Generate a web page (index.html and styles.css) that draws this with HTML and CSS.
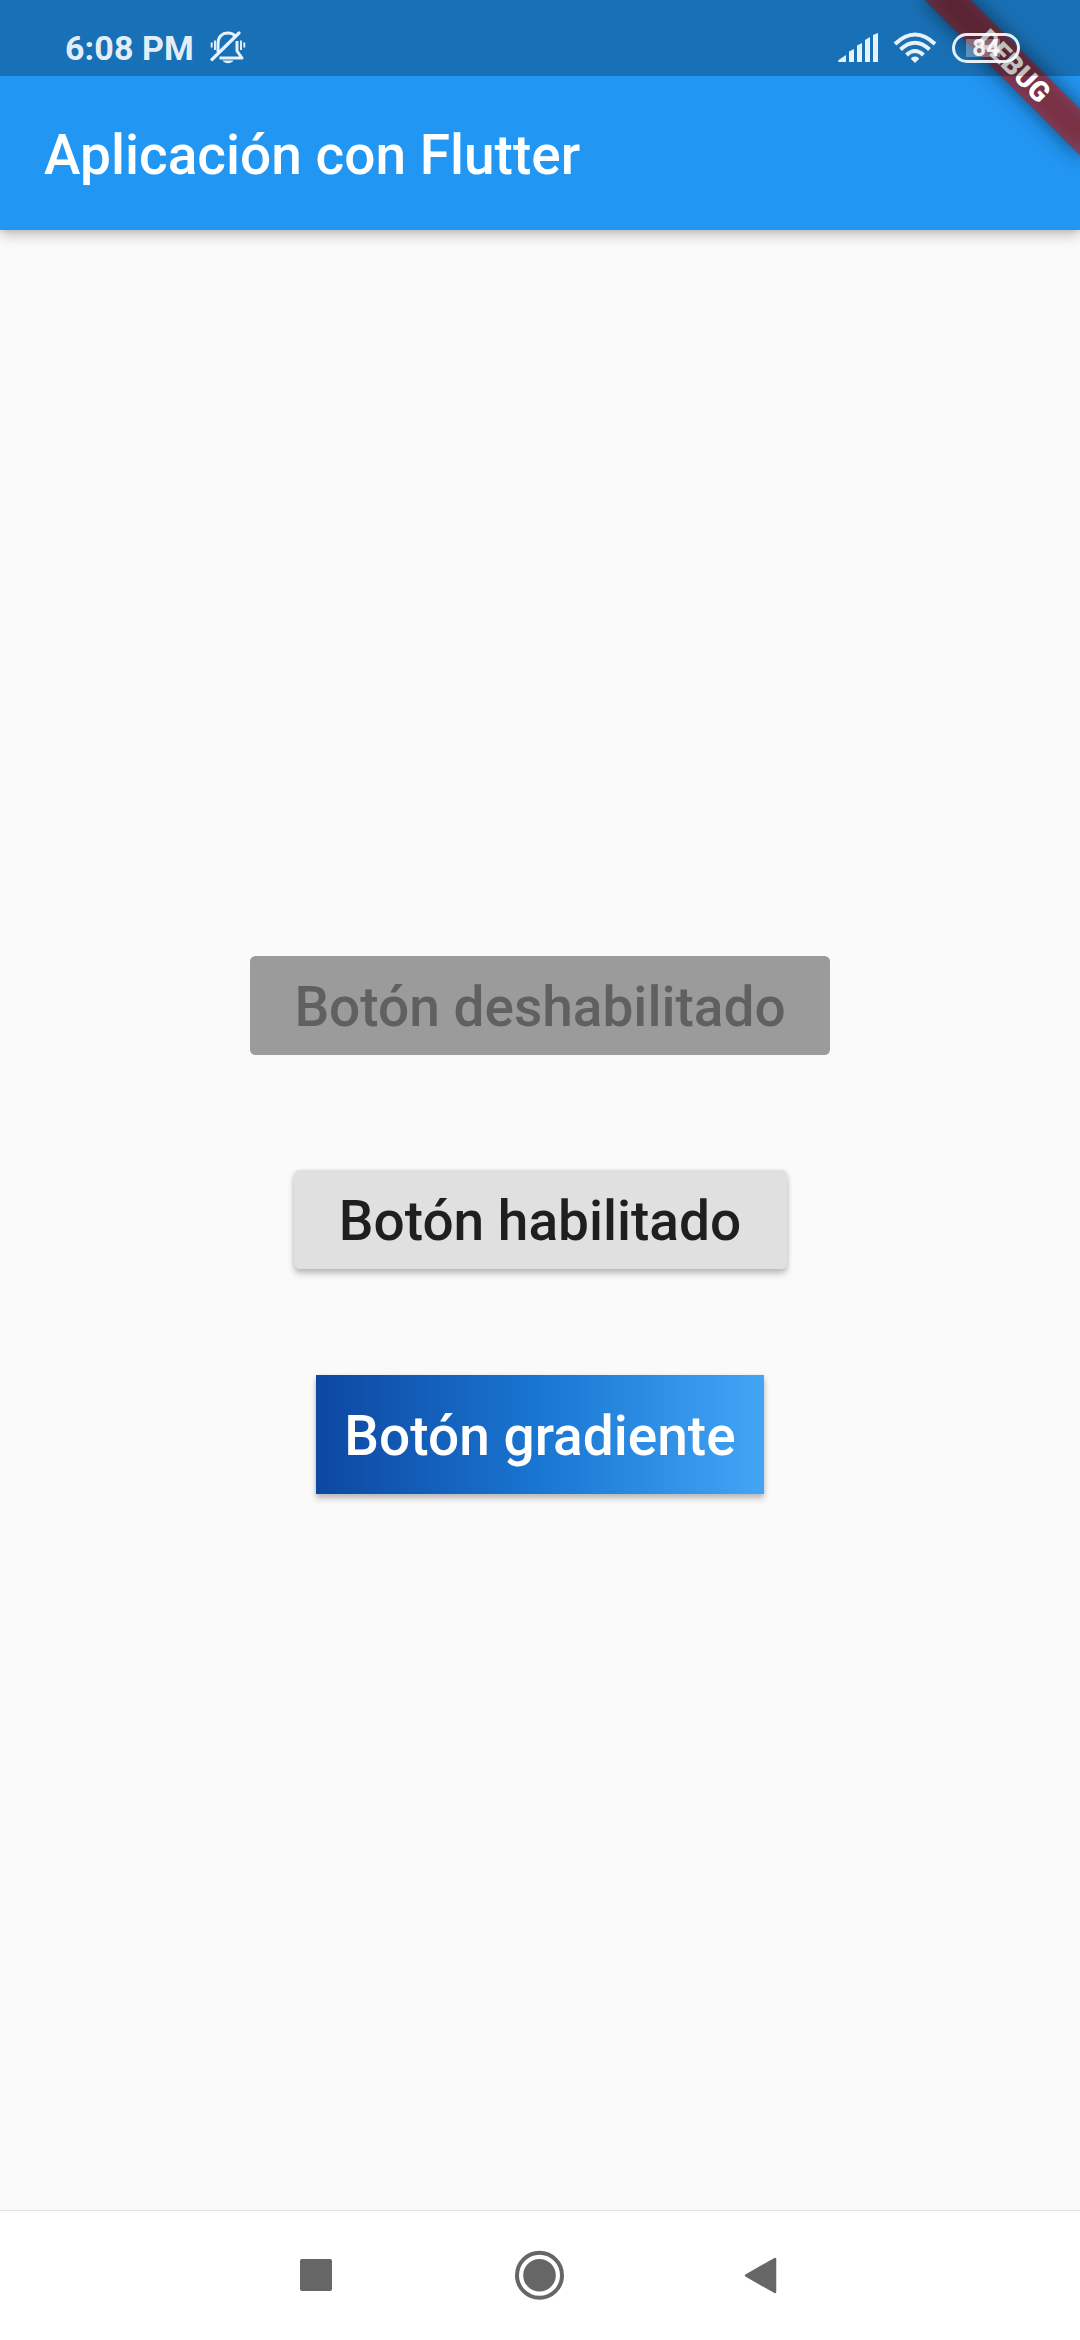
FILE: index.html
```html
<!DOCTYPE html>
<html lang="es">
<head>
<meta charset="utf-8">
<title>Aplicación con Flutter</title>
<link rel="stylesheet" href="styles.css">
</head>
<body>
<div class="screen">
  <header class="top">
    <div class="status">
      <span class="clock">6:08 PM</span>
      <svg class="bell" width="36" height="34" viewBox="0 0 36 34" fill="none" stroke="currentColor">
        <path d="M8 21V13C8 6 12 2 18 2C21 2 23.500 3 25 5" stroke-width="3"/>
        <path d="M27 10V20L32 27H9.500" stroke-width="3" stroke-linejoin="round"/>
        <path d="M2 28.500L29 2" stroke-width="3.200" stroke-linecap="round"/>
        <path d="M1.700 11.500V16.500M5 9.500V19M31 9.500V19M34.300 11.500V16.500" stroke-width="1.900"/>
        <path d="M12.500 29.500H23.500C21 33 15 33 12.500 29.500Z" fill="currentColor" stroke="none"/>
      </svg>
      <div class="indicators">
        <svg width="40" height="30" viewBox="0 0 40 30" fill="currentColor">
          <path d="M0 29Q0 27 2 26L8 22V29H1Q0 29 0 28ZM11 18.500L16 16V29H11ZM19 12.500L24 10V29H19ZM27 7L32 4V29H27ZM35 2L40 0V29H35Z"/>
        </svg>
        <svg class="wifi" width="44" height="32" viewBox="0 0 44 32" fill="none" stroke="currentColor" stroke-width="4">
          <path d="M2 12Q22 -7 42 12"/>
          <path d="M7.500 17.500Q22 4 36.500 17.500"/>
          <path d="M13.500 23Q22 15 30.500 23"/>
          <path d="M18 27C18 23.500 26 23.500 26 27L22 31Z" fill="currentColor" stroke="none"/>
        </svg>
        <div class="battery"><span class="charge"></span><span class="percent">84</span></div>
      </div>
    </div>
    <h1 class="title">Aplicación con Flutter</h1>
    <div class="banner"><span class="banner-text">DEBUG</span></div>
  </header>
  <main class="content">
    <button class="btn disabled" disabled>Botón deshabilitado</button>
    <button class="btn enabled">Botón habilitado</button>
    <button class="btn gradient">Botón gradiente</button>
  </main>
  <nav class="nav">
    <svg width="540" height="50" viewBox="270 2250 540 50" fill="#666">
      <rect x="300" y="2259" width="32" height="32" rx="2"/>
      <circle cx="539.500" cy="2275.300" r="22.500" fill="none" stroke="#666" stroke-width="4"/>
      <circle cx="539.500" cy="2275.300" r="16.300"/>
      <path d="M746 2275.500L775 2259V2292Z" stroke="#666" stroke-width="2.500" stroke-linejoin="round"/>
    </svg>
  </nav>
</div>
</body>
</html>
```
FILE: styles.css
```css
* {
  box-sizing: border-box;
}

body {
  margin: 0;
  font-family: Roboto, "Noto Sans", sans-serif;
}

.screen {
  width: 1080px;
  height: 2340px;
  display: flex;
  flex-direction: column;
  background: #fafafa;
  overflow: hidden;
}

.top {
  position: relative;
  height: 230px;
  background: #2196f3;
  box-shadow: 0 5px 12px rgba(0, 0, 0, 0.22), 0 1px 5px rgba(0, 0, 0, 0.1);
}

/* Translucent system bar, drawn over the app and its corner banner */
.status {
  position: relative;
  z-index: 2;
  height: 76px;
  padding: 20px 60px 0 65px;
  display: flex;
  align-items: center;
  background: rgba(0, 0, 0, 0.25);
  color: rgba(255, 255, 255, 0.9);
}

.clock {
  font-size: 34px;
  font-weight: 700;
  line-height: 40px;
  letter-spacing: 0.1px;
}

.bell {
  margin-left: 16px;
}

.indicators {
  display: flex;
  align-items: center;
  margin-left: auto;
}

.wifi {
  margin-left: 15px;
}

.battery {
  position: relative;
  width: 68px;
  height: 30px;
  margin-left: 15px;
  border: 3px solid currentColor;
  border-radius: 15px;
  font-size: 24px;
  font-weight: 700;
  line-height: 25px;
  text-align: center;
}

.charge {
  position: absolute;
  left: 11px;
  top: 3px;
  width: 34px;
  height: 18px;
  background: rgba(255, 255, 255, 0.3);
}

.percent {
  position: relative;
}

.title {
  margin: 0;
  padding-left: 44px;
  font-size: 55px;
  font-weight: 500;
  line-height: 158px;
  color: #fff;
}

/* Corner ribbon, turned about the top right corner of the screen */
.banner {
  position: absolute;
  z-index: 1;
  left: 970px;
  top: 77px;
  width: 220px;
  height: 33px;
  transform-origin: 110px -77px;
  transform: rotate(45deg);
  text-align: center;
}

.banner::before,
.banner::after {
  content: "";
  position: absolute;
  inset: 0;
}

.banner::before {
  background: rgba(0, 0, 0, 0.5);
  filter: blur(10.9px);
}

.banner::after {
  background: rgba(183, 28, 28, 0.627);
}

.banner-text {
  position: relative;
  z-index: 1;
  color: #fff;
  font-size: 28px;
  font-weight: 900;
  line-height: 33px;
}

.content {
  flex: 1;
  padding-top: 726px;
  display: flex;
  flex-direction: column;
  align-items: center;
}

.btn {
  border: 0;
  border-radius: 5.5px;
  height: 99px;
  padding: 2px 0 0;
  font-family: inherit;
  font-size: 55px;
  font-weight: 500;
  text-align: center;
}

.disabled {
  width: 580px;
  background: #9b9b9b;
  color: #606060;
}

.enabled {
  width: 493px;
  margin-top: 115px;
  background: #e0e0e0;
  color: #1f1f1f;
  box-shadow: 0 5px 6px rgba(0, 0, 0, 0.2), 0 1px 5px rgba(0, 0, 0, 0.12);
}

.gradient {
  width: 448px;
  height: 119px;
  margin-top: 106px;
  border-radius: 0;
  background: linear-gradient(to right, #0d47a1, #1976d2, #42a5f5);
  color: #fff;
  box-shadow: 0 5px 6px rgba(0, 0, 0, 0.2), 0 1px 5px rgba(0, 0, 0, 0.12);
}

.nav {
  height: 130px;
  border-top: 1px solid #e3e3e3;
  padding-top: 39px;
  display: flex;
  justify-content: center;
  align-items: flex-start;
  background: #fff;
}
```
